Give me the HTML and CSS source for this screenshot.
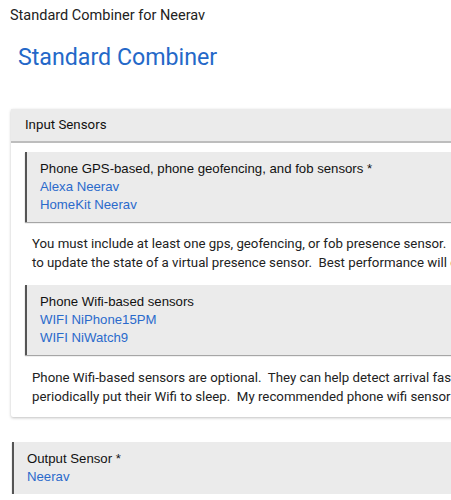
FILE: index.html
```html
<!DOCTYPE html>
<html>
<head>
<meta charset="utf-8">
<link rel="stylesheet" href="styles.css">
</head>
<body>
<div class="page-title">Standard Combiner for Neerav</div>
<h1 class="app-title">Standard Combiner</h1>

<section class="card">
  <div class="card-header">Input Sensors</div>
  <div class="card-body">
    <div class="input-box">
      <div class="input-label">Phone GPS-based, phone geofencing, and fob sensors *</div>
      <a class="input-value">Alexa Neerav</a>
      <a class="input-value">HomeKit Neerav</a>
    </div>
    <p class="para">You must include at least one gps, geofencing, or fob presence sensor.&nbsp; These are used<br>to update the state of a virtual presence sensor.&nbsp; Best performance will come from combining several sensors.</p>
    <div class="input-box">
      <div class="input-label">Phone Wifi-based sensors</div>
      <a class="input-value">WIFI NiPhone15PM</a>
      <a class="input-value">WIFI NiWatch9</a>
    </div>
    <p class="para para-last">Phone Wifi-based sensors are optional.&nbsp; They can help detect arrival faster, but phones<br>periodically put their Wifi to sleep.&nbsp; My recommended phone wifi sensor settings are below.</p>
  </div>
</section>

<div class="input-box output-box">
  <div class="input-label">Output Sensor *</div>
  <a class="input-value">Neerav</a>
</div>
</body>
</html>
```

FILE: styles.css
```css
html {
  overflow: hidden;
}
body {
  margin: 0;
  width: 700px;
  padding: 0 0 0 11px;
  font-family: Roboto, "Liberation Sans", sans-serif;
  color: #222;
  background: #fff;
}
.page-title {
  font-size: 14.5px;
  color: #222;
  margin: 7px 0 0 -1px;
  line-height: 17px;
}
.app-title {
  font-size: 23.2px;
  font-weight: 400;
  color: #2468c8;
  margin: 19px 0 0 7px;
  line-height: 28px;
}
.card {
  margin-top: 38px;
  background: #fff;
  box-shadow: 0 1px 3px rgba(0,0,0,0.25);
  border-radius: 2px;
}
.card-header {
  background: #ebebeb;
  font-size: 13.3px;
  height: 32px;
  line-height: 32px;
  padding-left: 14px;
  border-bottom: 2px solid #bdbdbd;
  color: #111;
}
.card-body {
  padding: 9px 0 11px 14px;
}
.input-box {
  background: #ebebeb;
  border-left: 2px solid #555;
  box-shadow: 0 1px 1px rgba(0,0,0,0.35);
  padding: 8px 0 8px 13px;
  font-family: "Liberation Sans", Arial, sans-serif;
  font-size: 13.2px;
  line-height: 18px;
}
.input-label {
  color: #111;
}
.input-value {
  display: block;
  color: #2a6acb;
  text-decoration: none;
}
.para {
  margin: 12px 0 13px 7px;
  font-size: 13.25px;
  line-height: 19px;
  white-space: nowrap;
  color: #222;
}
.para-last {
  margin: 13px 0 0 7px;
}
.output-box {
  margin: 25px 0 0 1px;
  padding: 8px 0 8px 13px;
}
```
